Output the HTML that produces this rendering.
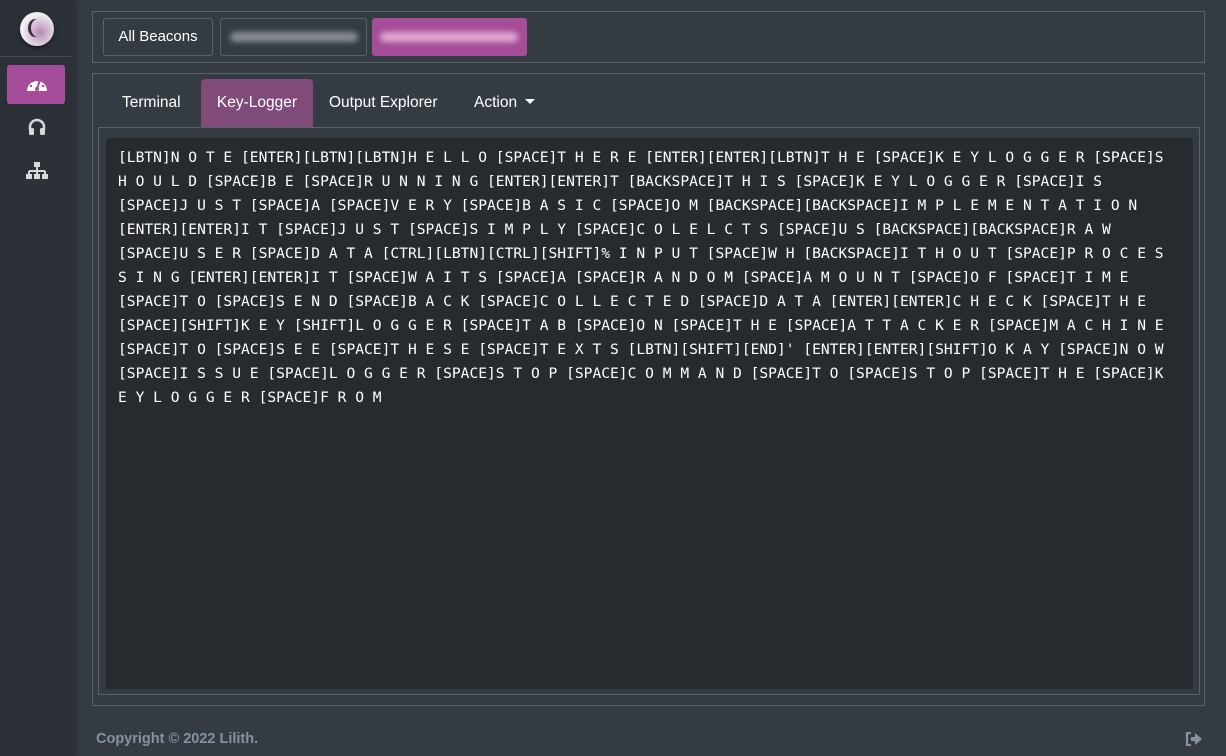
<!DOCTYPE html>
<html><head><meta charset="utf-8"><style>
*{box-sizing:border-box;margin:0;padding:0}
body{width:1226px;height:756px;background:#343b43;font-family:"Liberation Sans",sans-serif;position:relative;overflow:hidden}
.side{position:absolute;left:0;top:0;width:74px;height:756px;background:#2c3138;box-shadow:2px 0 4px rgba(0,0,0,.25)}
.logo{position:absolute;left:20px;top:12px;width:34px;height:34px;border-radius:50%;background:radial-gradient(circle at 60% 60%,#b58ab5,#f2f2f2 65%);box-shadow:0 2px 4px rgba(0,0,0,.5)}
.sep{position:absolute;left:0;top:56px;width:71px;height:1px;background:#444b53}
.act{position:absolute;left:7px;top:65px;width:58px;height:39px;background:#a54d98;border-radius:3px}
.card1{position:absolute;left:92px;top:11px;width:1113px;height:52px;border:1px solid #5a6169}
.btn{position:absolute;top:6px;height:38px;border:1px solid #5a6169;border-radius:3px;color:#fff;font-size:15px;line-height:36px;text-align:center}
.blur{position:absolute;top:13px;height:10px;border-radius:5px;filter:blur(3px)}
.card2{position:absolute;left:92px;top:73px;width:1113px;height:633px;border:1px solid #5a6169}
.tab{position:absolute;top:79px;height:48px;line-height:48px;color:#fff;font-size:15.5px}
.frame{position:absolute;left:98px;top:127px;width:1102px;height:568px;border:1px solid #5a6169}
.term{position:absolute;left:106px;top:138px;width:1087px;height:551px;background:#272b2f;border-radius:3px;padding:8px 12px;font-family:"DejaVu Sans Mono","Liberation Mono",monospace;font-size:14.6px;line-height:24px;color:#fff;white-space:pre}
.foot{position:absolute;left:96px;top:731px;color:#8593a1;font-weight:bold;font-size:14.5px}
</style></head><body>
<div class="side">
<div class="logo"><div style="position:absolute;left:11px;top:7px;width:14px;height:18px;border-radius:50%;box-shadow:-3px 0 0 #3a2e40"></div></div>
<div class="sep"></div>
<div class="act"></div>
<svg style="position:absolute;left:25px;top:74px" width="24" height="20" viewBox="0 0 24 20"><path d="M2 17 A10 10 0 1 1 22 17 Z" fill="#fff"/><path d="M12 15 L15 6" stroke="#a54d98" stroke-width="2"/><circle cx="12" cy="15" r="2" fill="#a54d98"/><circle cx="6" cy="12" r="1.2" fill="#a54d98"/><circle cx="18" cy="12" r="1.2" fill="#a54d98"/><circle cx="8" cy="7" r="1.2" fill="#a54d98"/></svg>
<svg style="position:absolute;left:27px;top:118px" width="20" height="18" viewBox="0 0 20 18"><path d="M3 12 V9 A7 7 0 0 1 17 9 V12" stroke="#d6d8da" stroke-width="2.5" fill="none"/><rect x="2" y="10" width="5" height="7" rx="1.5" fill="#d6d8da"/><rect x="13" y="10" width="5" height="7" rx="1.5" fill="#d6d8da"/></svg>
<svg style="position:absolute;left:25px;top:161px" width="24" height="20" viewBox="0 0 24 20"><rect x="9" y="1" width="6" height="5" fill="#d6d8da"/><path d="M12 6 V10 M4 10 H20 M4 10 V13 M12 10 V13 M20 10 V13" stroke="#d6d8da" stroke-width="2" fill="none"/><rect x="1" y="13" width="6" height="5" fill="#d6d8da"/><rect x="9" y="13" width="6" height="5" fill="#d6d8da"/><rect x="17" y="13" width="6" height="5" fill="#d6d8da"/></svg>
</div>
<div class="card1">
<div class="btn" style="left:10px;width:110px">All Beacons</div>
<div class="btn" style="left:127px;width:147px"><div class="blur" style="left:9px;width:128px;background:#8a8e92"></div></div>
<div class="btn" style="left:279px;width:155px;background:#a54d98;border-color:#a54d98"><div class="blur" style="left:7px;width:138px;background:#e0a8d5"></div></div>
</div>
<div class="card2"></div>
<div class="tab" style="left:122px">Terminal</div>
<div class="tab" style="left:201px;width:112px;background:#804a7b;border-radius:4px 4px 0 0;text-align:center">Key-Logger</div>
<div class="tab" style="left:329px">Output Explorer</div>
<div class="tab" style="left:474px">Action <span style="display:inline-block;border-left:5px solid transparent;border-right:5px solid transparent;border-top:5px solid #fff;vertical-align:middle;margin-left:4px;margin-top:-3px"></span></div>
<div class="frame"></div>
<div class="term">[LBTN]N O T E [ENTER][LBTN][LBTN]H E L L O [SPACE]T H E R E [ENTER][ENTER][LBTN]T H E [SPACE]K E Y L O G G E R [SPACE]S
H O U L D [SPACE]B E [SPACE]R U N N I N G [ENTER][ENTER]T [BACKSPACE]T H I S [SPACE]K E Y L O G G E R [SPACE]I S
[SPACE]J U S T [SPACE]A [SPACE]V E R Y [SPACE]B A S I C [SPACE]O M [BACKSPACE][BACKSPACE]I M P L E M E N T A T I O N
[ENTER][ENTER]I T [SPACE]J U S T [SPACE]S I M P L Y [SPACE]C O L E L C T S [SPACE]U S [BACKSPACE][BACKSPACE]R A W
[SPACE]U S E R [SPACE]D A T A [CTRL][LBTN][CTRL][SHIFT]% I N P U T [SPACE]W H [BACKSPACE]I T H O U T [SPACE]P R O C E S
S I N G [ENTER][ENTER]I T [SPACE]W A I T S [SPACE]A [SPACE]R A N D O M [SPACE]A M O U N T [SPACE]O F [SPACE]T I M E
[SPACE]T O [SPACE]S E N D [SPACE]B A C K [SPACE]C O L L E C T E D [SPACE]D A T A [ENTER][ENTER]C H E C K [SPACE]T H E
[SPACE][SHIFT]K E Y [SHIFT]L O G G E R [SPACE]T A B [SPACE]O N [SPACE]T H E [SPACE]A T T A C K E R [SPACE]M A C H I N E
[SPACE]T O [SPACE]S E E [SPACE]T H E S E [SPACE]T E X T S [LBTN][SHIFT][END]' [ENTER][ENTER][SHIFT]O K A Y [SPACE]N O W
[SPACE]I S S U E [SPACE]L O G G E R [SPACE]S T O P [SPACE]C O M M A N D [SPACE]T O [SPACE]S T O P [SPACE]T H E [SPACE]K
E Y L O G G E R [SPACE]F R O M</div>
<div class="foot">Copyright © 2022 Lilith.</div>
<svg style="position:absolute;left:1185px;top:732px" width="18" height="14" viewBox="0 0 18 14"><path d="M6 1 H2 V13 H6" stroke="#8593a1" stroke-width="2.2" fill="none"/><path d="M6 5 H10 V1 L17 7 L10 13 V9 H6 Z" fill="#8593a1"/></svg>
</body></html>
